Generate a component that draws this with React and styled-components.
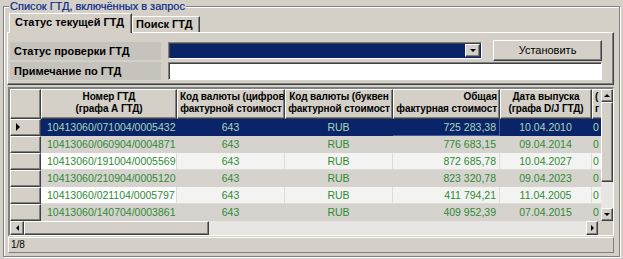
import React from "react";
import styled, { createGlobalStyle, css } from "styled-components";

const GlobalStyle = createGlobalStyle`
  html, body { margin: 0; padding: 0; background: #d4d0c8; }
  body { font-family: "Liberation Sans", Arial, sans-serif; font-size: 11px; color: #000; }
  * { box-sizing: border-box; }
`;

const raised = css`
  border: 1px solid;
  border-color: #fff #404040 #404040 #fff;
  box-shadow: inset -1px -1px #808080;
`;
const sunken = css`
  border: 1px solid;
  border-color: #808080 #fff #fff #808080;
  box-shadow: inset 1px 1px #404040;
`;

const Screen = styled.div`
  width: 623px;
  height: 259px;
  padding: 6px 3px 2px 3px;
  overflow: hidden;
`;

const Group = styled.section`
  position: relative;
  height: 100%;
  border: 1px solid #808080;
  box-shadow: inset 1px 1px #fff, 1px 1px #fff;
  padding: 6px 5px 3px 3px;
  display: flex;
  flex-direction: column;
`;

const GroupTitle = styled.div`
  position: absolute;
  top: -7px;
  left: 5px;
  padding: 0 1px;
  background: #d4d0c8;
  color: #0b2a86;
  font-size: 11px;
  line-height: 13px;
  -webkit-text-stroke: 0.2px #0b2a86;
`;

const TabStrip = styled.div`
  display: flex;
  align-items: flex-end;
  height: 19px;
  padding-left: 2px;
  position: relative;
  z-index: 2;
`;

const Tab = styled.div`
  height: ${(p) => (p.$active ? 20 : 16)}px;
  width: ${(p) => p.$w}px;
  border: 1px solid;
  border-color: #fff #404040 transparent #fff;
  border-bottom: none;
  box-shadow: inset -1px 0 #808080;
  background: #d4d0c8;
  font-weight: bold;
  font-size: 11px;
  line-height: ${(p) => (p.$active ? 17 : 14)}px;
  padding-left: ${(p) => (p.$active ? 5 : 3)}px;
  margin-bottom: ${(p) => (p.$active ? -1 : 0)}px;
  white-space: nowrap;
`;

const Panel = styled.div`
  ${raised};
  height: 53px;
  padding: 7px 2px 0 2px;
  display: flex;
  flex-direction: column;
  gap: 1px;
  position: relative;
  z-index: 1;
`;

const FormRow = styled.div`
  display: flex;
  align-items: center;
  height: ${(p) => p.$h}px;
`;

const FieldLabel = styled.div`
  width: 151px;
  height: 18px;
  background: #c6c3bd;
  font-weight: bold;
  font-size: 11px;
  line-height: 18px;
  padding-left: 4px;
  margin-right: 7px;
  white-space: nowrap;
`;

const Combo = styled.div`
  ${sunken};
  width: 314px;
  height: 17px;
  background: #0a246a;
  display: flex;
  justify-content: flex-end;
  padding: 1px;
`;

const DropBtn = styled.div`
  ${raised};
  width: 15px;
  height: 100%;
  background: #d4d0c8;
  display: flex;
  align-items: center;
  justify-content: center;
`;

const Button = styled.div`
  ${raised};
  margin-left: 11px;
  width: 109px;
  height: 21px;
  background: #d4d0c8;
  font-size: 11px;
  line-height: 19px;
  text-align: center;
`;

const TextInput = styled.div`
  ${sunken};
  width: 434px;
  height: 18px;
  background: #fff;
`;

const GridBox = styled.div`
  ${sunken};
  margin: 2px 0 0 1px;
  width: 606px;
  height: 150px;
  border-width: 2px 1px 1px 2px;
  display: grid;
  grid-template-columns: 1fr 12px;
  grid-template-rows: 132px 14px;
  background: #d4d0c8;
`;

const TableArea = styled.div`
  overflow: hidden;
  display: flex;
  flex-direction: column;
`;

const Row = styled.div`
  display: flex;
  flex: none;
  height: ${(p) => p.$h}px;
`;

const HeadCell = styled.div`
  ${raised};
  flex: none;
  width: ${(p) => p.$w}px;
  height: 100%;
  display: flex;
  flex-direction: column;
  justify-content: center;
  align-items: stretch;
  text-align: ${(p) => p.$align || "center"};
  font-weight: bold;
  font-size: 10px;
  letter-spacing: -0.1px;
  line-height: 12px;
  padding: 0 2px 1px 2px;
  overflow: hidden;
  white-space: nowrap;
  background: #d4d0c8;
`;

const Indicator = styled.div`
  ${raised};
  flex: none;
  width: 31px;
  height: 100%;
  background: #d4d0c8;
  display: flex;
  align-items: center;
  padding-left: 5px;
`;

const Cell = styled.div`
  flex: none;
  width: ${(p) => p.$w}px;
  height: 100%;
  padding: 0 ${(p) => (p.$align === "right" ? 3 : 2)}px 0 ${(p) => p.$pl}px;
  background: ${(p) => p.$bg};
  color: ${(p) => p.$fg};
  border-right: 1px solid ${(p) => p.$sep};
  border-bottom: 1px solid ${(p) => p.$sep};
  text-align: ${(p) => p.$align};
  font-size: 10.5px;
  line-height: 16px;
  white-space: nowrap;
  overflow: hidden;
`;

const VScroll = styled.div`
  display: flex;
  flex-direction: column;
  background: #e8e6e2;
`;

const HScrollRow = styled.div`
  grid-column: 1 / 3;
  display: flex;
`;

const HScroll = styled.div`
  flex: 1;
  display: flex;
  background: #e8e6e2;
`;

const ScrollBtn = styled.div`
  ${raised};
  flex: none;
  width: ${(p) => p.$w}px;
  height: ${(p) => p.$h}px;
  background: #d4d0c8;
  display: flex;
  align-items: center;
  justify-content: center;
`;

const Thumb = styled.div`
  ${raised};
  flex: none;
  width: ${(p) => p.$w}px;
  height: ${(p) => p.$h}px;
  background: #d4d0c8;
`;

const Track = styled.div`
  flex: 1;
`;

const Corner = styled.div`
  width: 15px;
  background: #d4d0c8;
`;

const StatusBar = styled.div`
  margin: 1px 0 0 1px;
  width: 606px;
  height: 16px;
  border: 1px solid;
  border-color: #fff #808080 #808080 #fff;
  font-size: 10px;
  line-height: 14px;
  padding-left: 2px;
  color: #000;
`;

const Arrow = ({ dir, size = 4 }) => {
  const s = size;
  const pts = {
    down: `0,0 ${2 * s},0 ${s},${s}`,
    up: `0,${s} ${2 * s},${s} ${s},0`,
    left: `${s},0 ${s},${2 * s} 0,${s}`,
    right: `0,0 0,${2 * s} ${s},${s}`,
  }[dir];
  const vertical = dir === "up" || dir === "down";
  return (
    <svg width={vertical ? 2 * s : s} height={vertical ? s : 2 * s} style={{ display: "block" }}>
      <polygon points={pts} fill="#000" />
    </svg>
  );
};

const columns = [
  { w: 136, align: "left", pl: 6, head: ["Номер ГТД", "(графа А ГТД)"], headAlign: "center" },
  { w: 108, align: "center", pl: 2, head: ["Код валюты (цифров", "фактурной стоимост"], headAlign: "center" },
  { w: 108, align: "center", pl: 2, head: ["Код валюты (буквен", "фактурной стоимост"], headAlign: "center" },
  { w: 107, align: "right", pl: 2, head: ["Общая", "фактурная стоимост"], headAlign: "right" },
  { w: 92, align: "center", pl: 2, head: ["Дата выпуска", "(графа D/J ГТД)"], headAlign: "center" },
  { w: 60, align: "left", pl: 1, head: ["(", "г"], headAlign: "left" },
];

const rows = [
  ["10413060/071004/0005432", "643", "RUB", "725 283,38", "10.04.2010", "0"],
  ["10413060/060904/0004871", "643", "RUB", "776 683,15", "09.04.2014", "0"],
  ["10413060/191004/0005569", "643", "RUB", "872 685,78", "10.04.2027", "0"],
  ["10413060/210904/0005120", "643", "RUB", "823 320,78", "09.04.2023", "0"],
  ["10413060/021104/0005797", "643", "RUB", "411 794,21", "11.04.2005", "0"],
  ["10413060/140704/0003861", "643", "RUB", "409 952,39", "07.04.2015", "0"],
];

function rowStyle(i, c) {
  if (i === 0) return { bg: "#0a246a", fg: "#a9d8b4", sep: c === 3 ? "#3d5a94" : "#0a246a" };
  if (i % 2 === 1) return { bg: "#d6d3ce", fg: "#2f8a35", sep: "#d6d3ce" };
  return { bg: c === 0 ? "#ffffff" : "#f3f3f2", fg: "#2f8a35", sep: "#dedcd8" };
}

export default function App() {
  return (
    <>
      <GlobalStyle />
      <Screen>
        <Group>
          <GroupTitle>Список ГТД, включённых в запрос</GroupTitle>
          <TabStrip>
            <Tab $active $w={123}>Статус текущей ГТД</Tab>
            <Tab $w={68}>Поиск ГТД</Tab>
          </TabStrip>
          <Panel>
            <FormRow $h={21}>
              <FieldLabel>Статус проверки ГТД</FieldLabel>
              <Combo>
                <DropBtn>
                  <Arrow dir="down" size={3} />
                </DropBtn>
              </Combo>
              <Button>Установить</Button>
            </FormRow>
            <FormRow $h={18}>
              <FieldLabel>Примечание по ГТД</FieldLabel>
              <TextInput />
            </FormRow>
          </Panel>
          <GridBox>
            <TableArea>
              <Row $h={30}>
                <HeadCell $w={31} />
                {columns.map((col, c) => (
                  <HeadCell key={c} $w={col.w} $align={col.headAlign}>
                    <span>{col.head[0]}</span>
                    <span>{col.head[1]}</span>
                  </HeadCell>
                ))}
              </Row>
              {rows.map((r, i) => (
                <Row key={i} $h={17}>
                  <Indicator>{i === 0 && <Arrow dir="right" size={4} />}</Indicator>
                  {columns.map((col, c) => {
                    const st = rowStyle(i, c);
                    return (
                      <Cell
                        key={c}
                        $w={col.w}
                        $align={col.align}
                        $pl={col.pl}
                        $bg={st.bg}
                        $fg={st.fg}
                        $sep={st.sep}
                      >
                        {r[c]}
                      </Cell>
                    );
                  })}
                </Row>
              ))}
            </TableArea>
            <VScroll>
              <ScrollBtn $w={12} $h={13}>
                <Arrow dir="up" size={3} />
              </ScrollBtn>
              <Thumb $w={12} $h={80} />
              <Track />
              <ScrollBtn $w={12} $h={13}>
                <Arrow dir="down" size={3} />
              </ScrollBtn>
            </VScroll>
            <HScrollRow>
              <HScroll>
                <ScrollBtn $w={14} $h={14}>
                  <Arrow dir="left" size={3} />
                </ScrollBtn>
                <Thumb $w={185} $h={14} />
                <Track />
                <ScrollBtn $w={12} $h={14}>
                  <Arrow dir="right" size={3} />
                </ScrollBtn>
              </HScroll>
              <Corner />
            </HScrollRow>
          </GridBox>
          <StatusBar>1/8</StatusBar>
        </Group>
      </Screen>
    </>
  );
}
